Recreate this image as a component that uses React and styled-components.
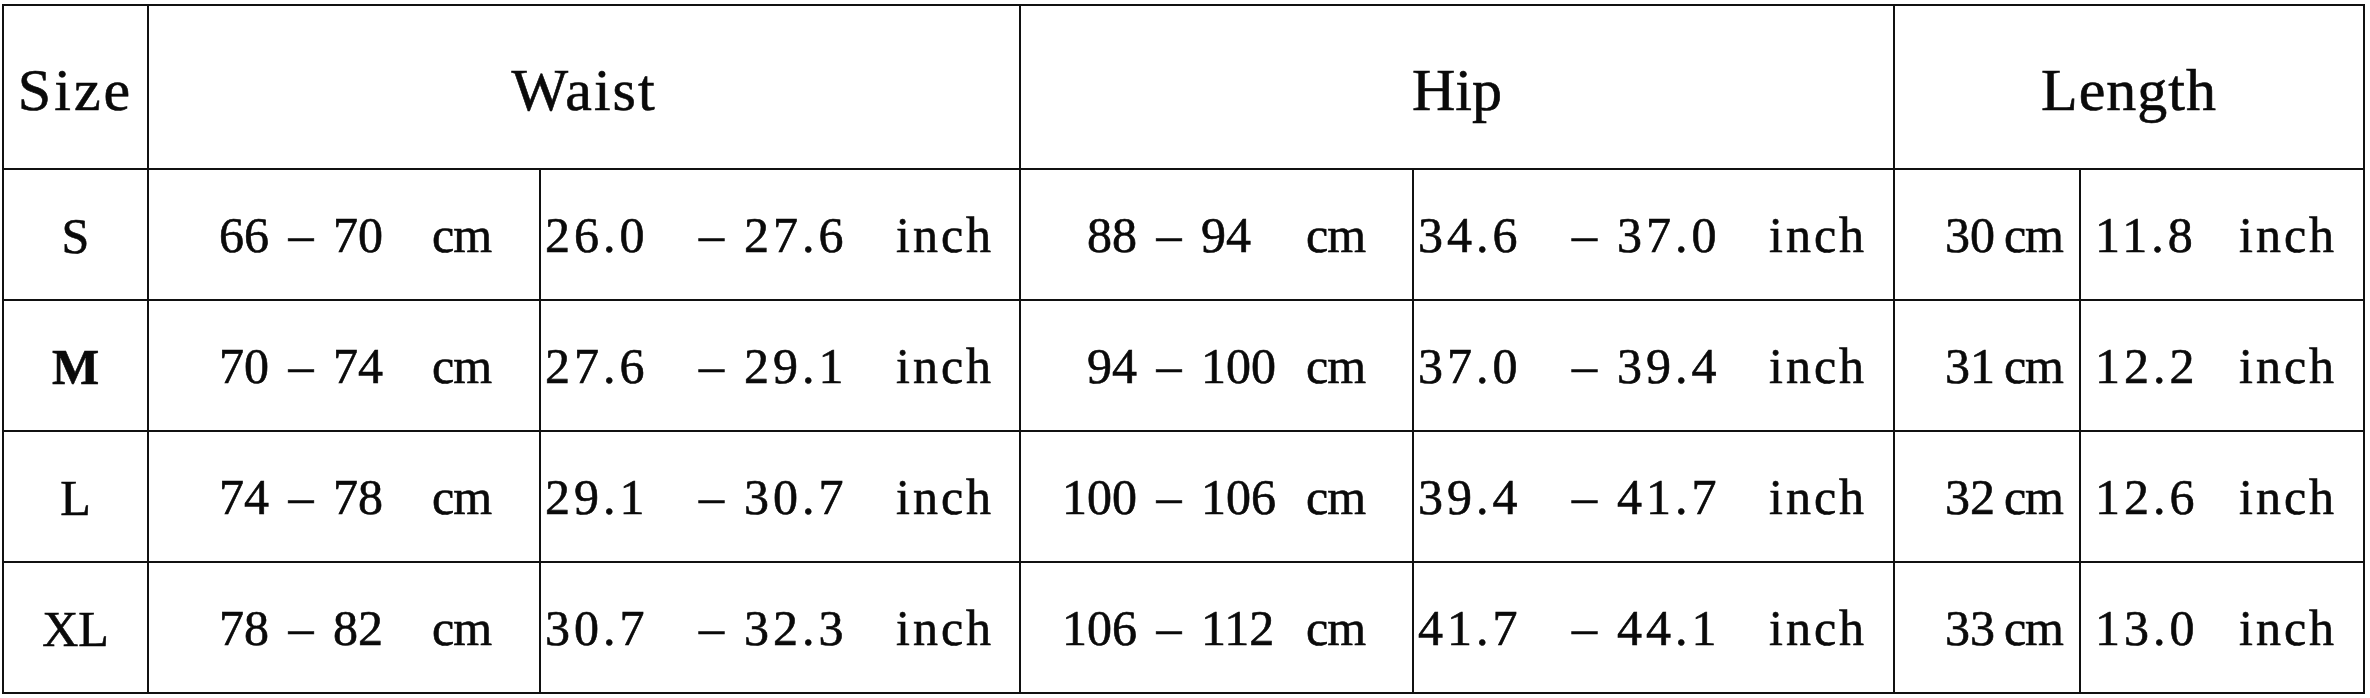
import React from "react";
import styled, { createGlobalStyle } from "styled-components";

const Global = createGlobalStyle`
  html, body {
    margin: 0;
    padding: 0;
    background: #ffffff;
  }
  body {
    font-family: "Liberation Serif", "Times New Roman", serif;
    color: #0a0a0a;
  }
`;

const Table = styled.div`
  display: grid;
  grid-template-columns: 145px 392px 480px 393px 481px 186px 284px;
  grid-template-rows: 164px repeat(4, 131px);
  margin: 4px 0 0 2px;
  width: max-content;
  border-top: 2px solid #111111;
  border-left: 2px solid #111111;
  background: #ffffff;
`;

const Cell = styled.div`
  box-sizing: border-box;
  border-right: 2px solid #111111;
  border-bottom: 2px solid #111111;
  grid-column: span ${(p) => p.$span || 1};
  min-width: 0;
  line-height: 1;
  font-size: 50px;
  white-space: nowrap;
  -webkit-text-stroke: 0.6px #0a0a0a;
`;

const HeaderCell = styled(Cell)`
  display: flex;
  align-items: center;
  justify-content: center;
  font-size: 60px;
  letter-spacing: ${(p) => p.$spacing || 0}px;
  padding-top: 6px;
`;

const SizeCell = styled(Cell)`
  display: flex;
  align-items: center;
  justify-content: center;
  font-weight: ${(p) => (p.$bold ? 700 : 400)};
  padding-top: 2px;
`;

const CmRange = styled(Cell)`
  display: grid;
  grid-template-columns: ${(p) => p.$lowEnd}px 64px ${(p) => p.$highW}px auto;
  align-items: center;
  align-content: center;
`;

const InchRange = styled(Cell)`
  display: grid;
  grid-template-columns: 154px 45px 152px auto;
  align-items: center;
  align-content: center;
  padding-left: 4px;
`;

const LenCm = styled(Cell)`
  display: flex;
  align-items: center;
  justify-content: flex-end;
  gap: 9px;
  padding-right: 16px;
`;

const LenInch = styled(Cell)`
  display: grid;
  grid-template-columns: 144px auto;
  align-items: center;
  align-content: center;
  padding-left: 14px;
`;

const Low = styled.span`
  justify-self: ${(p) => (p.$end ? "end" : "start")};
  letter-spacing: ${(p) => (p.$dec ? 4 : 0)}px;
`;

const Dash = styled.span`
  justify-self: ${(p) => (p.$start ? "start" : "center")};
`;

const High = styled.span`
  justify-self: start;
  letter-spacing: ${(p) => (p.$dec ? 4 : 0)}px;
`;

const Unit = styled.span`
  justify-self: start;
  letter-spacing: ${(p) => (p.$inch ? 3 : -1)}px;
`;

const rows = [
  { size: "S", wcm: ["66", "70"], win: ["26.0", "27.6"], hcm: ["88", "94"], hin: ["34.6", "37.0"], lcm: "30", lin: "11.8" },
  { size: "M", bold: true, wcm: ["70", "74"], win: ["27.6", "29.1"], hcm: ["94", "100"], hin: ["37.0", "39.4"], lcm: "31", lin: "12.2" },
  { size: "L", wcm: ["74", "78"], win: ["29.1", "30.7"], hcm: ["100", "106"], hin: ["39.4", "41.7"], lcm: "32", lin: "12.6" },
  { size: "XL", wcm: ["78", "82"], win: ["30.7", "32.3"], hcm: ["106", "112"], hin: ["41.7", "44.1"], lcm: "33", lin: "13.0" },
];

function CmCell({ range, lowEnd, highW }) {
  return (
    <CmRange $lowEnd={lowEnd} $highW={highW}>
      <Low $end>{range[0]}</Low>
      <Dash>–</Dash>
      <High>{range[1]}</High>
      <Unit>cm</Unit>
    </CmRange>
  );
}

function InchCell({ range }) {
  return (
    <InchRange>
      <Low $dec>{range[0]}</Low>
      <Dash $start>–</Dash>
      <High $dec>{range[1]}</High>
      <Unit $inch>inch</Unit>
    </InchRange>
  );
}

export default function App() {
  return (
    <>
      <Global />
      <Table>
        <HeaderCell $spacing={3}>Size</HeaderCell>
        <HeaderCell $span={2} $spacing={2}>Waist</HeaderCell>
        <HeaderCell $span={2}>Hip</HeaderCell>
        <HeaderCell $span={2} $spacing={1}>Length</HeaderCell>
        {rows.map((r) => (
          <React.Fragment key={r.size}>
            <SizeCell $bold={r.bold}>{r.size}</SizeCell>
            <CmCell range={r.wcm} lowEnd={120} highW={99} />
            <InchCell range={r.win} />
            <CmCell range={r.hcm} lowEnd={116} highW={105} />
            <InchCell range={r.hin} />
            <LenCm>
              <span>{r.lcm}</span>
              <Unit>cm</Unit>
            </LenCm>
            <LenInch>
              <Low $dec>{r.lin}</Low>
              <Unit $inch>inch</Unit>
            </LenInch>
          </React.Fragment>
        ))}
      </Table>
    </>
  );
}
